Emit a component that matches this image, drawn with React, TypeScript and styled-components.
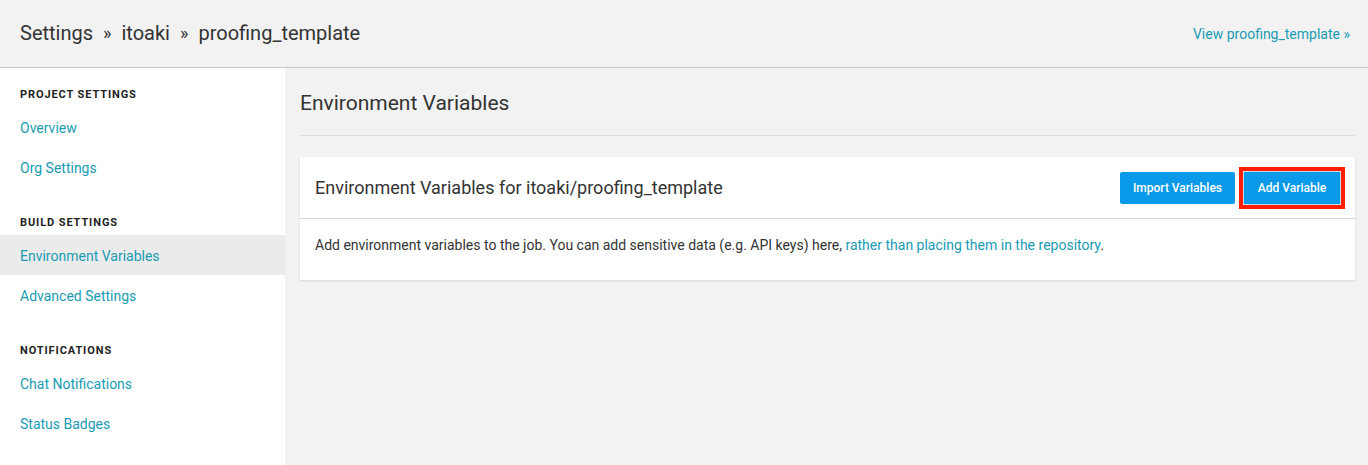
import React from "react";
import styled, { createGlobalStyle } from "styled-components";

const GlobalStyle = createGlobalStyle`
  html, body { margin: 0; padding: 0; }
  body {
    background: #f2f2f2;
    font-family: Roboto, "Noto Sans", "Liberation Sans", sans-serif;
    color: #333;
  }
  * { box-sizing: border-box; }
`;

const Page = styled.div`
  display: flex;
  flex-direction: column;
  min-height: 100vh;
`;

const TopBar = styled.header`
  height: 68px;
  display: flex;
  align-items: center;
  justify-content: space-between;
  padding: 0 18px 0 20px;
  border-bottom: 1px solid #c8c8c8;
  background: #f2f2f2;
`;

const Crumbs = styled.div`
  font-size: 20px;
  color: #333;
  display: flex;
  align-items: center;
  margin-top: -2px;
`;

const Sep = styled.span`
  margin: 0 10px;
  font-size: 18px;
`;

const Link = styled.a`
  color: #1a9bb3;
  text-decoration: none;
  font-size: 14px;
`;

const Body = styled.div`
  flex: 1;
  display: flex;
`;

const Sidebar = styled.nav`
  width: 285px;
  background: #fff;
  padding-top: 12px;
  flex-shrink: 0;
`;

const SectionTitle = styled.div<{ $first?: boolean }>`
  height: 28px;
  display: flex;
  align-items: center;
  padding-left: 20px;
  margin-top: ${(p) => (p.$first ? "0" : "21px")};
  margin-bottom: -1px;
  font-size: 11px;
  font-weight: 700;
  letter-spacing: 0.9px;
  color: #222;
  text-transform: uppercase;
`;

const NavItem = styled.a<{ $active?: boolean }>`
  display: flex;
  align-items: center;
  height: 40px;
  padding-left: 20px;
  padding-top: 1px;
  font-size: 14px;
  color: #1a9bb3;
  text-decoration: none;
  background: ${(p) => (p.$active ? "#ebebeb" : "transparent")};
`;

const Main = styled.main`
  flex: 1;
  padding: 21px 13px 0 15px;
`;

const Heading = styled.h1`
  margin: 0;
  font-size: 21px;
  font-weight: 400;
  line-height: 28px;
  color: #333;
  padding-bottom: 18px;
  border-bottom: 1px solid #dcdcdc;
`;

const Card = styled.section`
  margin-top: 21px;
  background: #fff;
  box-shadow: 0 1px 2px rgba(0, 0, 0, 0.12);
`;

const CardHeader = styled.div`
  height: 62px;
  display: flex;
  align-items: center;
  justify-content: space-between;
  padding: 0 10px 0 15px;
  border-bottom: 1px solid #d4d4d4;
`;

const CardTitle = styled.h2`
  margin: 0;
  font-size: 18px;
  font-weight: 400;
  color: #333;
`;

const Actions = styled.div`
  display: flex;
  align-items: center;
  gap: 4px;
`;

const Button = styled.button`
  height: 32px;
  padding: 0 13px;
  border: none;
  border-radius: 2px;
  background: #0a9ae9;
  color: #fff;
  font-family: Roboto, "Noto Sans", "Liberation Sans", sans-serif;
  font-size: 12px;
  font-weight: 500;
  cursor: pointer;
`;

const Highlight = styled.div`
  border: 4px solid #ff1e00;
  display: flex;
`;

const OutlinedButton = styled(Button)`
  height: 34px;
  width: 98px;
  padding: 0;
  border: 1px solid #c6dbe8;
  border-radius: 0;
`;

const CardBody = styled.div`
  padding: 16px 15px 25px;
  font-size: 14px;
  line-height: 20px;
  color: #333;
`;

export default function App() {
  return (
    <Page>
      <GlobalStyle />
      <TopBar>
        <Crumbs>
          <span>Settings</span>
          <Sep>»</Sep>
          <span>itoaki</span>
          <Sep>»</Sep>
          <span>proofing_template</span>
        </Crumbs>
        <Link href="#">View proofing_template »</Link>
      </TopBar>
      <Body>
        <Sidebar>
          <SectionTitle $first>Project Settings</SectionTitle>
          <NavItem href="#">Overview</NavItem>
          <NavItem href="#">Org Settings</NavItem>
          <SectionTitle>Build Settings</SectionTitle>
          <NavItem href="#" $active>
            Environment Variables
          </NavItem>
          <NavItem href="#">Advanced Settings</NavItem>
          <SectionTitle>Notifications</SectionTitle>
          <NavItem href="#">Chat Notifications</NavItem>
          <NavItem href="#">Status Badges</NavItem>
        </Sidebar>
        <Main>
          <Heading>Environment Variables</Heading>
          <Card>
            <CardHeader>
              <CardTitle>Environment Variables for itoaki/proofing_template</CardTitle>
              <Actions>
                <Button>Import Variables</Button>
                <Highlight>
                  <OutlinedButton>Add Variable</OutlinedButton>
                </Highlight>
              </Actions>
            </CardHeader>
            <CardBody>
              Add environment variables to the job. You can add sensitive data (e.g. API keys) here,{" "}
              <Link href="#">rather than placing them in the repository</Link>.
            </CardBody>
          </Card>
        </Main>
      </Body>
    </Page>
  );
}
